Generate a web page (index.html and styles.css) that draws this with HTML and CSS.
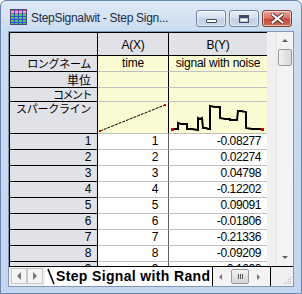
FILE: index.html
```html
<!DOCTYPE html>
<html>
<head>
<meta charset="utf-8">
<link rel="stylesheet" href="styles.css">
</head>
<body>
<div class="window">
  <div class="titlebar">
    <svg class="appicon" width="17" height="16" viewBox="0 0 17 16">
      <rect x="0.5" y="0.5" width="16" height="15" fill="#ffffff" stroke="#4a4a7a"/>
      <rect x="1" y="1" width="15" height="4" fill="#e8506a"/>
      <rect x="1" y="5" width="15" height="10" fill="#3ed84a"/>
      <g stroke="#ffffff" stroke-width="1">
        <line x1="1" y1="3" x2="16" y2="3"/>
      </g>
      <g stroke="#3a4ad8" stroke-width="1">
        <line x1="4.5" y1="1" x2="4.5" y2="15"/>
        <line x1="8.5" y1="1" x2="8.5" y2="15"/>
        <line x1="12.5" y1="1" x2="12.5" y2="15"/>
        <line x1="1" y1="7.5" x2="16" y2="7.5"/>
        <line x1="1" y1="10.5" x2="16" y2="10.5"/>
        <line x1="1" y1="13.5" x2="16" y2="13.5"/>
      </g>
    </svg>
    <span class="title">StepSignalwit - Step Sign...</span>
    <div class="capbtns">
      <div class="capbtn">
        <span class="minglyph"></span>
      </div>
      <div class="capbtn">
        <span class="maxglyph"></span>
      </div>
      <div class="capbtn close">
        <svg width="13" height="11" viewBox="0 0 13 11">
          <path d="M1.5 1.5 L11.5 9.5 M11.5 1.5 L1.5 9.5" stroke="#5a2a28" stroke-width="4" stroke-linecap="square"/>
          <path d="M1.5 1.5 L11.5 9.5 M11.5 1.5 L1.5 9.5" stroke="#ffffff" stroke-width="2" stroke-linecap="square"/>
        </svg>
      </div>
    </div>
  </div>
  <div class="client">
    <div class="main">
      <div class="sheet">
        <div class="grid">
          <div class="hc corner"></div>
          <div class="hc colhead">A(X)</div>
          <div class="hc colhead last">B(Y)</div>

          <div class="rh jp">ロングネーム</div>
          <div class="lc">time</div>
          <div class="lc last">signal with noise</div>

          <div class="rh jp kanji">単位</div>
          <div class="lc"></div>
          <div class="lc last"></div>

          <div class="rh jp short">コメント</div>
          <div class="lc"></div>
          <div class="lc last"></div>

          <div class="rh jp spark">スパークライン</div>
          <div class="lc spark">
            <svg width="70" height="31" viewBox="0 0 70 31">
              <path d="M2 29 L67 3" stroke="#000" stroke-width="1" stroke-dasharray="3 1" fill="none"/>
              <rect x="1" y="28" width="2" height="2" fill="#e00000"/>
              <rect x="66" y="2" width="2" height="2" fill="#e00000"/>
            </svg>
          </div>
          <div class="lc spark last">
            <svg width="98" height="31" viewBox="0 0 98 31">
              <polyline fill="none" stroke="#000" stroke-width="2" points="4,27 9,27 9,21 12,22 18,22 18,27 23,27 29,28 29,16 31,17 33,16 34,26 37,26 39,27 41,27 41,4 46,5 51,5 51,16 56,17 61,17 61,18 65,18 68,18 69,9 72,9 77,10 77,26 83,27 88,27 93,27"/>
              <rect x="2" y="26" width="3" height="3" fill="#e00000"/>
              <rect x="92" y="26" width="3" height="3" fill="#e00000"/>
            </svg>
          </div>

          <div class="rh">1</div><div class="dc a">1</div><div class="dc b">-0.08277</div>
          <div class="rh">2</div><div class="dc a">2</div><div class="dc b">0.02274</div>
          <div class="rh">3</div><div class="dc a">3</div><div class="dc b">0.04798</div>
          <div class="rh">4</div><div class="dc a">4</div><div class="dc b">-0.12202</div>
          <div class="rh">5</div><div class="dc a">5</div><div class="dc b">0.09091</div>
          <div class="rh">6</div><div class="dc a">6</div><div class="dc b">-0.01806</div>
          <div class="rh">7</div><div class="dc a">7</div><div class="dc b">-0.21336</div>
          <div class="rh">8</div><div class="dc a">8</div><div class="dc b">-0.09209</div>
          <div class="rh">9</div><div class="dc a">9</div><div class="dc b">0.1600</div>
        </div>
      </div>
      <div class="vscroll">
        <div class="varrow up"></div>
        <div class="vthumb"></div>
        <div class="vtrack"></div>
        <div class="varrow down"></div>
      </div>
    </div>
    <div class="tabbar">
      <div class="navbtns">
        <div class="navbtn"><span class="tri left"></span></div>
        <div class="navbtn"><span class="tri right"></span></div>
      </div>
      <div class="tab">
        <svg class="slash" width="8" height="17" viewBox="0 0 8 17">
          <path d="M1 1 L7 16" stroke="#000" stroke-width="1.6"/>
        </svg>
        <span class="tabtext">Step Signal with Rand</span>
      </div>
      <div class="hscroll">
        <span class="tri left small"></span>
        <div class="hthumb"><span></span><span></span><span></span></div>
        <span class="tri right small"></span>
      </div>
      <div class="grip">
        <svg width="10" height="10" viewBox="0 0 10 10">
          <g fill="#b8b8b8">
            <rect x="8" y="2" width="1" height="1"/>
            <rect x="6" y="4" width="1" height="1"/><rect x="8" y="4" width="1" height="1"/>
            <rect x="4" y="6" width="1" height="1"/><rect x="6" y="6" width="1" height="1"/><rect x="8" y="6" width="1" height="1"/>
            <rect x="2" y="8" width="1" height="1"/><rect x="4" y="8" width="1" height="1"/><rect x="6" y="8" width="1" height="1"/><rect x="8" y="8" width="1" height="1"/>
          </g>
        </svg>
      </div>
    </div>
  </div>
</div>
</body>
</html>
```

FILE: styles.css
```css
* { box-sizing: border-box; }
html, body { margin: 0; padding: 0; background: #ffffff; }
body { width: 302px; height: 294px; overflow: hidden; }

.window {
  width: 302px;
  height: 294px;
  border: 1px solid #6a86aa;
  border-radius: 6px 6px 0 0;
  background: linear-gradient(#dfe9f5 0px, #cbdcef 30px, #c3d6ee 294px);
  padding: 0 7px 6px 7px;
  display: flex;
  flex-direction: column;
  font-family: "Liberation Sans", Arial, sans-serif;
}

.titlebar {
  height: 30px;
  flex: none;
  display: flex;
  align-items: flex-start;
  padding-top: 7px;
}
.appicon { margin-left: 2px; margin-top: 1px; flex: none; }
.title {
  margin-left: 4px;
  margin-top: 3px;
  font-size: 12px;
  letter-spacing: -0.3px;
  color: #1e2c44;
  white-space: nowrap;
  flex: 1;
  overflow: hidden;
}
.capbtns { display: flex; gap: 3px; margin-top: 2px; margin-right: 2px; }
.capbtn {
  width: 30px;
  height: 17px;
  border: 1px solid #6d85a8;
  border-radius: 3px;
  background: linear-gradient(#e8eef7 0%, #d6e0ee 45%, #c3d0e3 55%, #cbd8ea 100%);
  box-shadow: inset 0 0 0 1px rgba(255,255,255,0.55);
  display: flex;
  align-items: center;
  justify-content: center;
}
.capbtn.close {
  border-color: #7a3d38;
  background: linear-gradient(#e9a89c 0%, #d9766a 45%, #c04a3c 55%, #cf6a58 100%);
}
.minglyph {
  width: 11px; height: 4px;
  margin-top: 5px;
  background: #ffffff;
  border: 1px solid #3c4a60;
  border-radius: 1px;
}
.maxglyph {
  width: 10px; height: 8px;
  background: #ffffff;
  border: 1px solid #3c4a60;
  border-top-width: 3px;
  box-shadow: inset 0 0 0 1px #b8c4d4;
}

.client {
  height: 256px;
  flex: none;
  display: flex;
  flex-direction: column;
  background: #f0f0f0;
  border: 1px solid #8199b8;
}
.main { height: 234px; flex: none; display: flex; }
.sheet {
  flex: 1;
  height: 234px;
  overflow: hidden;
  background: #ebebeb;
  border-top: 1px solid #000;
  border-left: 1px solid #000;
}
.grid {
  display: grid;
  grid-template-columns: 88px 71px 99px;
  grid-template-rows: 23px 16px 16px 14px 32px repeat(9, 16px);
  font-size: 12px;
}
.grid > div {
  overflow: hidden;
  white-space: nowrap;
  line-height: 15px;
}
.hc {
  background: #e1e1e8;
  border-right: 1px solid #000;
  border-bottom: 1px solid #000;
}
.colhead {
  text-align: center;
  line-height: 22px !important;
  padding-top: 1px;
  letter-spacing: -0.3px;
}
.rh {
  background: #e1e1e8;
  border-right: 1px solid #000;
  border-bottom: 1px solid #000;
  text-align: right;
  padding-right: 6px;
  letter-spacing: -0.4px;
}
.grid > .rh.jp {
  font-family: "Noto Sans CJK JP", "Liberation Sans", sans-serif;
  font-size: 11px;
  letter-spacing: -0.3px;
  padding-right: 6px;
  line-height: 15px;
  overflow: visible;
}
.grid > .rh.kanji { font-size: 12px; letter-spacing: 0; }
.grid > .rh.short { letter-spacing: -1.5px; line-height: 13px; }
.grid > .rh.spark { line-height: 13px; }
.lc {
  background: #fbfbd3;
  border-right: 1px solid #000;
  border-bottom: 1px solid #c0c0c0;
  text-align: center;
  letter-spacing: -0.2px;
}
.last { border-right-color: #909090 !important; }
.hc.last { border-right-color: #000 !important; }
.lc.spark svg { display: block; }
.dc {
  background: #ffffff;
  border-right: 1px solid #606060;
  border-bottom: 1px solid #c0c0c0;
  text-align: right;
  letter-spacing: -0.4px;
}
.dc.a { padding-right: 10px; }
.dc.b { padding-right: 6px; border-right-color: #909090; }

.vscroll {
  width: 17px;
  height: 234px;
  margin-left: 9px;
  display: flex;
  flex-direction: column;
  background: #f3f3f3;
  border-left: 1px solid #e6e6e6;
}
.varrow { height: 17px; position: relative; flex: none; }
.varrow::after {
  content: "";
  position: absolute;
  left: 5px;
  border-left: 3px solid transparent;
  border-right: 3px solid transparent;
}
.varrow.up::after { top: 7px; border-bottom: 3px solid #606060; }
.varrow.down::after { top: 7px; border-top: 3px solid #606060; }
.vthumb {
  height: 17px;
  flex: none;
  margin: 0 1px;
  border: 1px solid #989898;
  border-radius: 2px;
  background: linear-gradient(90deg, #f2f2f2, #e4e4e4 50%, #d8d8d8);
}
.vtrack { flex: 1; }

.tabbar {
  height: 20px;
  flex: none;
  display: flex;
  background: #ffffff;
  border-top: 1px solid #000;
}
.navbtns {
  display: flex;
  padding: 1px 2px 0 2px;
  background: #f0f0f0;
}
.navbtn {
  width: 16px;
  height: 16px;
  border: 1px solid #c8c8c8;
  background: #f4f4f4;
  display: flex;
  align-items: center;
  justify-content: center;
}
.tri { width: 0; height: 0; border-top: 4px solid transparent; border-bottom: 4px solid transparent; }
.tri.left { border-right: 4px solid #777; }
.tri.right { border-left: 4px solid #777; }
.tri.small { border-top-width: 3px; border-bottom-width: 3px; }
.tri.small.left { border-right-width: 3px; }
.tri.small.right { border-left-width: 3px; }

.tab {
  width: 168px;
  display: flex;
  align-items: flex-start;
  border-right: 1px solid #000;
  background: #ffffff;
  overflow: hidden;
}
.slash { margin-left: 2px; margin-top: 1px; flex: none; }
.tabtext {
  font-size: 14px;
  font-weight: bold;
  letter-spacing: 0.35px;
  line-height: 18px;
  margin-left: 1px;
  white-space: nowrap;
}
.hscroll {
  width: 58px;
  flex: none;
  display: flex;
  align-items: center;
  padding-left: 6px;
  background: #f3f3f3;
  border-right: 1px solid #000;
}
.hscroll .tri.left { margin-right: 9px; }
.hthumb {
  width: 18px;
  height: 15px;
  border: 1px solid #989898;
  border-radius: 2px;
  background: linear-gradient(#f4f4f4, #e2e2e2 50%, #d6d6d6);
  display: flex;
  align-items: center;
  justify-content: center;
  gap: 1px;
  margin-right: 8px;
}
.hthumb span { width: 1px; height: 5px; background: #555; }
.grip {
  flex: 1;
  background: #f0f0f0;
  display: flex;
  align-items: flex-end;
  justify-content: flex-end;
  padding: 0 1px 1px 0;
}
```
